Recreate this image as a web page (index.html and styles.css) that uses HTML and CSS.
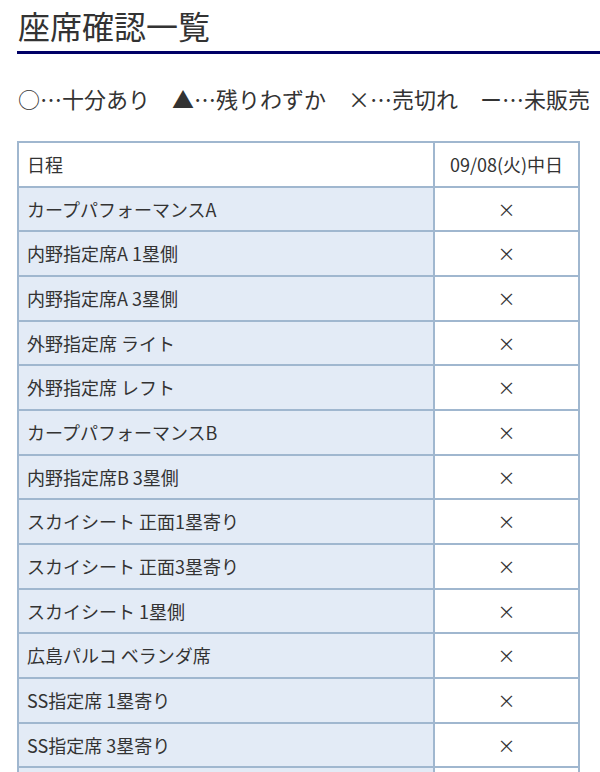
FILE: index.html
```html
<!DOCTYPE html>
<html lang="ja">
<head>
<meta charset="utf-8">
<title>座席確認一覧</title>
<link rel="stylesheet" href="styles.css">
</head>
<body>
<div class="page">
  <h1 class="title">座席確認一覧</h1>
  <p class="legend">○…十分あり　▲…残りわずか　×…売切れ　ー…未販売</p>
  <table class="seats">
    <tr><td class="name head">日程</td><td class="stat">09/08(火)中日</td></tr>
    <tr><td class="name">カープパフォーマンスA</td><td class="stat">×</td></tr>
    <tr><td class="name">内野指定席A 1塁側</td><td class="stat">×</td></tr>
    <tr><td class="name">内野指定席A 3塁側</td><td class="stat">×</td></tr>
    <tr><td class="name">外野指定席 ライト</td><td class="stat">×</td></tr>
    <tr><td class="name">外野指定席 レフト</td><td class="stat">×</td></tr>
    <tr><td class="name">カープパフォーマンスB</td><td class="stat">×</td></tr>
    <tr><td class="name">内野指定席B 3塁側</td><td class="stat">×</td></tr>
    <tr><td class="name">スカイシート 正面1塁寄り</td><td class="stat">×</td></tr>
    <tr><td class="name">スカイシート 正面3塁寄り</td><td class="stat">×</td></tr>
    <tr><td class="name">スカイシート 1塁側</td><td class="stat">×</td></tr>
    <tr><td class="name">広島パルコ ベランダ席</td><td class="stat">×</td></tr>
    <tr><td class="name">SS指定席 1塁寄り</td><td class="stat">×</td></tr>
    <tr><td class="name">SS指定席 3塁寄り</td><td class="stat">×</td></tr>
    <tr><td class="name">SS指定席 3塁側</td><td class="stat">×</td></tr>
  </table>
</div>
</body>
</html>
```

FILE: styles.css
```css
html, body {
  margin: 0;
  padding: 0;
  background: #fff;
}
body {
  font-family: "Noto Sans CJK JP", "Noto Sans", sans-serif;
  color: #333;
  overflow: hidden;
}
.page {
  padding-left: 17px;
}
.title {
  margin: 0;
  padding: 2px 0 3px 1px;
  font-size: 32px;
  font-weight: normal;
  line-height: 46px;
  border-bottom: 3px solid #000066;
}
.legend {
  margin: 28px 0 0 1px;
  font-size: 22px;
  line-height: 32px;
  white-space: nowrap;
}
.seats {
  margin-top: 27px;
  width: 563px;
  border-collapse: collapse;
  border: 2px solid #a0b7cf;
}
.seats td {
  border: 2px solid #a0b7cf;
  font-size: 18px;
  line-height: 24.67px;
  padding: 9px 8px;
  box-sizing: border-box;
}
.name {
  background: #e3ebf6;
  text-align: left;
}
.name.head {
  background: #fff;
}
.stat {
  width: 145px;
  text-align: center;
  background: #fff;
}
```
